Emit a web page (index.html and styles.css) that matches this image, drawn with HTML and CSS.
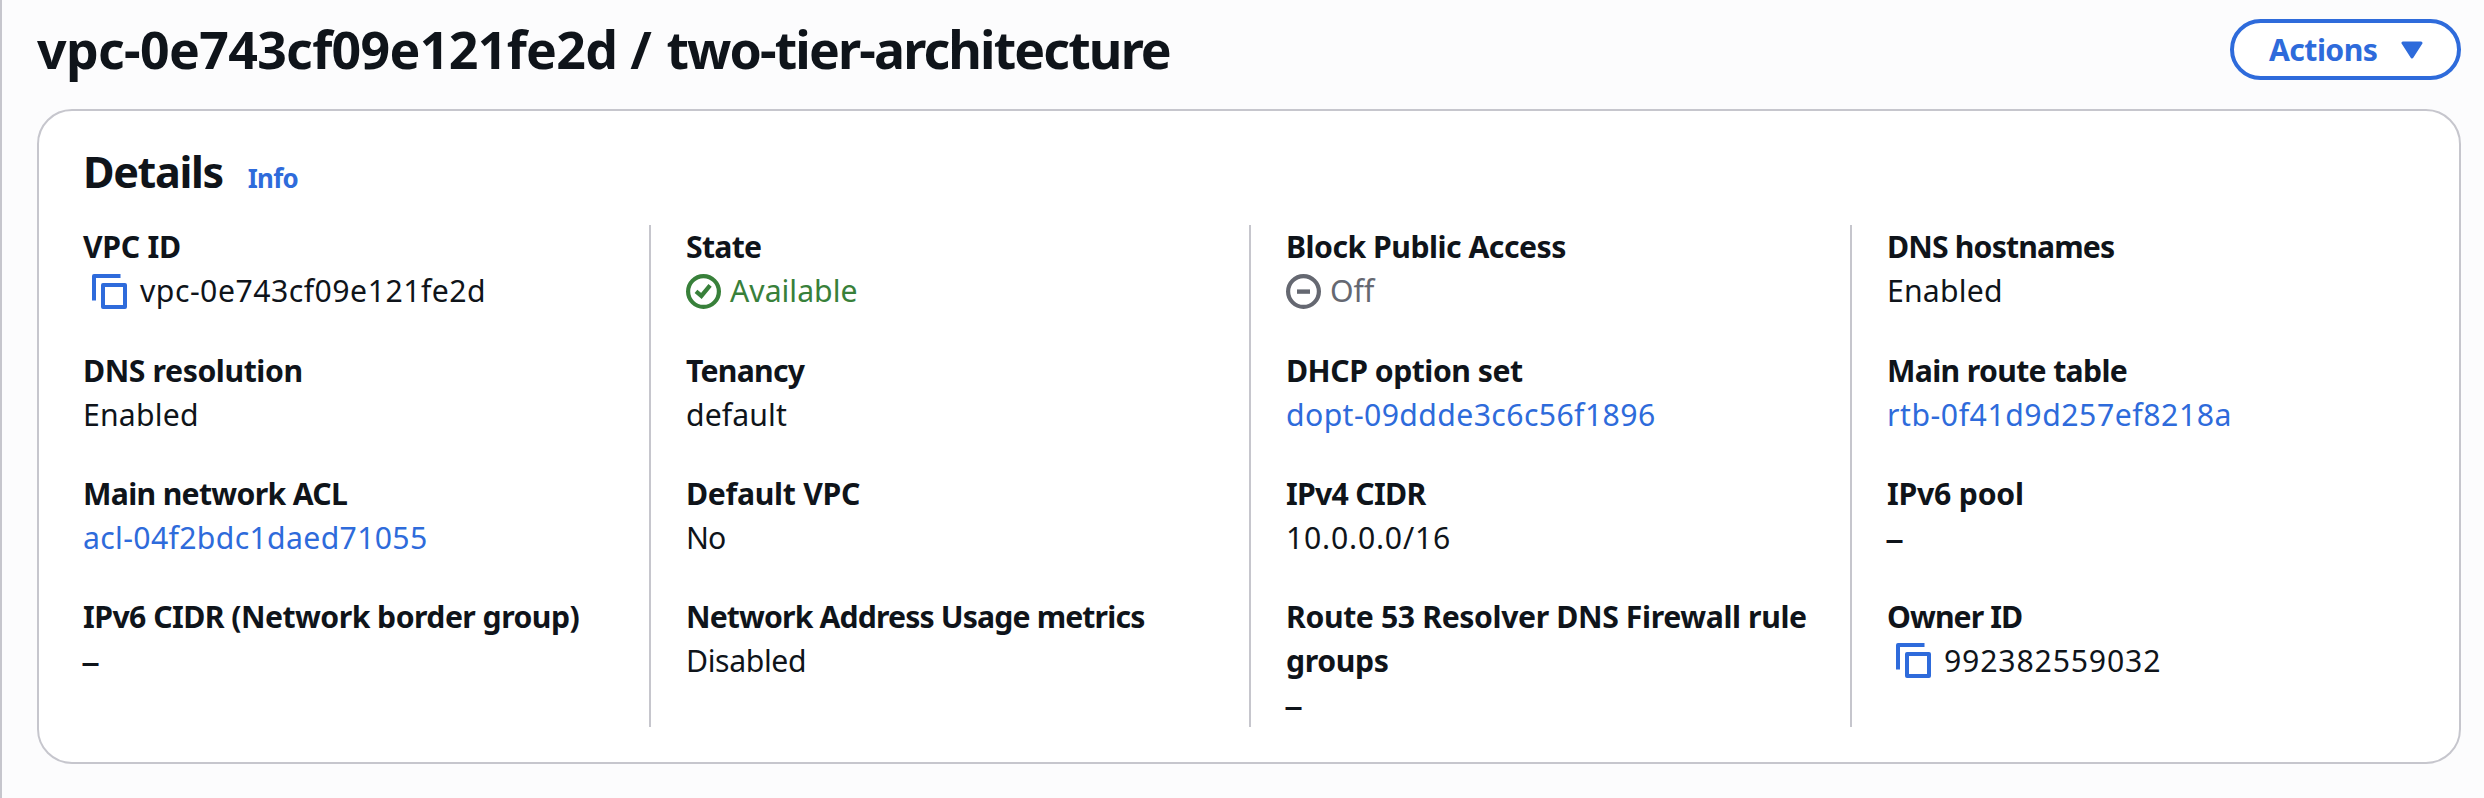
FILE: index.html
```html
<!DOCTYPE html>
<html lang="en">
<head>
<meta charset="utf-8">
<title>VPC details</title>
<link rel="stylesheet" href="styles.css">
</head>
<body>
<svg class="sprite" aria-hidden="true">
  <symbol id="copy" viewBox="0 0 35 35"><path d="M2 26.5V2h26.5M11 11h22v22H11z" fill="none" stroke="currentColor" stroke-width="4" stroke-linejoin="round"/></symbol>
  <symbol id="check" viewBox="0 0 35 35"><circle cx="17.5" cy="17.5" r="15.4" fill="none" stroke="currentColor" stroke-width="4.2"/><path d="M10 17.3l5.4 4.6 8.7-10.6" fill="none" stroke="currentColor" stroke-width="4.2"/></symbol>
  <symbol id="minus" viewBox="0 0 35 35"><circle cx="17.5" cy="17.5" r="15.4" fill="none" stroke="currentColor" stroke-width="4.2"/><path d="M11 17.6h13" fill="none" stroke="currentColor" stroke-width="4.4"/></symbol>
</svg>
<main class="page">
  <header class="page-header">
    <h1 class="title"><span class="title-id">vpc-0e743cf09e121fe2d /</span> <span class="title-name">two-tier-architecture</span></h1>
    <button class="actions" type="button"><span>Actions</span>
      <svg class="caret" viewBox="0 0 22 18"><path d="M2 2h18l-9 14z" fill="currentColor" stroke="currentColor" stroke-width="3" stroke-linejoin="round"/></svg>
    </button>
  </header>
  <section class="card">
    <div class="card-header"><h2 class="card-title">Details</h2><a class="info">Info</a></div>
    <div class="columns">
      <div class="column">
        <div class="item vpc-id"><div class="label">VPC ID</div><div class="value copyable"><svg class="icon link"><use href="#copy"/></svg><span>vpc-0e743cf09e121fe2d</span></div></div>
        <div class="item dns-resolution"><div class="label">DNS resolution</div><div class="value">Enabled</div></div>
        <div class="item network-acl"><div class="label">Main network ACL</div><div class="value"><a class="link">acl-04f2bdc1daed71055</a></div></div>
        <div class="item ipv6-cidr"><div class="label">IPv6 CIDR (Network border group)</div><div class="value empty">–</div></div>
      </div>
      <div class="column">
        <div class="item state"><div class="label">State</div><div class="value status success"><svg class="icon"><use href="#check"/></svg><span>Available</span></div></div>
        <div class="item tenancy"><div class="label">Tenancy</div><div class="value">default</div></div>
        <div class="item default-vpc"><div class="label">Default VPC</div><div class="value">No</div></div>
        <div class="item usage-metrics"><div class="label">Network Address Usage metrics</div><div class="value">Disabled</div></div>
      </div>
      <div class="column">
        <div class="item public-access"><div class="label">Block Public Access</div><div class="value status stopped"><svg class="icon"><use href="#minus"/></svg><span>Off</span></div></div>
        <div class="item dhcp"><div class="label">DHCP option set</div><div class="value"><a class="link">dopt-09ddde3c6c56f1896</a></div></div>
        <div class="item ipv4-cidr"><div class="label">IPv4 CIDR</div><div class="value">10.0.0.0/16</div></div>
        <div class="item firewall"><div class="label">Route 53 Resolver DNS Firewall rule groups</div><div class="value empty">–</div></div>
      </div>
      <div class="column">
        <div class="item dns-hostnames"><div class="label">DNS hostnames</div><div class="value">Enabled</div></div>
        <div class="item route-table"><div class="label">Main route table</div><div class="value"><a class="link">rtb-0f41d9d257ef8218a</a></div></div>
        <div class="item ipv6-pool"><div class="label">IPv6 pool</div><div class="value empty">–</div></div>
        <div class="item owner"><div class="label">Owner ID</div><div class="value copyable"><svg class="icon link"><use href="#copy"/></svg><span>992382559032</span></div></div>
      </div>
    </div>
  </section>
</main>
</body>
</html>
```
FILE: styles.css
```css
* { box-sizing: border-box; }
body { margin: 0; background: #fcfcfd; color: #0f141a; font: 400 30.2px/44px "Noto Sans", "Open Sans", sans-serif; }
.sprite { display: none; }
.page { height: 798px; border-left: 2px solid #c6c6cd; padding: 16px 23px 0 35px; overflow: hidden; }
.page-header { display: flex; justify-content: space-between; align-items: flex-start; height: 93px; }
.title { margin: 0; font-size: 51.8px; line-height: 66px; font-weight: 700; white-space: nowrap; }
.title-id { letter-spacing: -0.66px; }
.title-name { margin-left: 2px; letter-spacing: -1.87px; }
.actions { display: flex; align-items: center; gap: 24px; width: 231px; height: 61px; margin: 3px 0 0; padding: 0 0 0 35px; border: 4px solid #2e6bdb; border-radius: 31px; background: #fff; color: #2e6bdb; font: 700 30.2px/44px "Noto Sans", sans-serif; letter-spacing: -0.56px; }
.caret { display: block; width: 22px; height: 18px; }
.card { height: 655px; padding: 34px 44px 0; border: 2px solid #c6c6cd; border-radius: 35px; background: #fff; }
.card-header { display: flex; align-items: baseline; gap: 25px; height: 80px; }
.card-title { margin: 0; font-size: 43.1px; line-height: 53px; font-weight: 700; letter-spacing: -1.35px; }
.info { color: #2e6bdb; font-size: 25.9px; font-weight: 700; line-height: 40px; letter-spacing: -0.7px; }
.columns { display: grid; grid-template-columns: 566px 600px 601px 1fr; height: 502px; }
.column { display: flex; flex-direction: column; gap: 35.2px; padding-top: 0.4px; }
.column + .column { padding-left: 35px; border-left: 2px solid #c6c6cd; }
.label { font-weight: 700; letter-spacing: var(--label-spacing, 0); }
.value { display: flex; align-items: center; height: 44px; letter-spacing: var(--value-spacing, 0); }
.empty { font-size: 38px; line-height: 40px; margin-left: -2px; padding-bottom: 1px; }
.icon { flex: none; width: 35px; height: 35px; }
.copyable { padding-left: 9px; gap: 13px; }
.status { gap: 9px; }
.link { color: #2e6bdb; }
.success { color: #38803a; }
.stopped { color: #656871; }
.vpc-id { --label-spacing: -0.27px; --value-spacing: 0.5px; }
.dns-resolution { --label-spacing: -0.4px; --value-spacing: 0.2px; }
.network-acl { --label-spacing: -0.68px; --value-spacing: 0.34px; }
.ipv6-cidr { --label-spacing: -0.54px; }
.state { --label-spacing: -0.73px; }
.tenancy { --label-spacing: -0.75px; --value-spacing: 0.11px; }
.default-vpc { --label-spacing: -0.28px; --value-spacing: -1px; }
.usage-metrics { --label-spacing: -0.86px; --value-spacing: -0.37px; }
.public-access { --label-spacing: -0.5px; }
.dhcp { --label-spacing: -0.48px; --value-spacing: 0.4px; }
.ipv4-cidr { --label-spacing: -0.71px; --value-spacing: 0.79px; }
.firewall { --label-spacing: -0.38px; }
.dns-hostnames { --label-spacing: -0.83px; --value-spacing: 0.2px; }
.route-table { --label-spacing: -0.66px; --value-spacing: 0.55px; }
.ipv6-pool { --label-spacing: -0.21px; }
.owner { --label-spacing: -0.92px; --value-spacing: 0.84px; }
```
